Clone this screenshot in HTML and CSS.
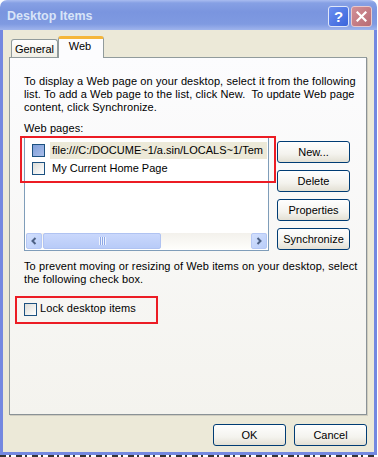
FILE: index.html
```html
<!DOCTYPE html>
<html lang="en">
<head>
  <meta charset="UTF-8" />
  <title>Desktop Items</title>
  <link rel="stylesheet" href="styles.css">
</head>
<body>

<div class="window">
  <div class="titlebar">
    <span class="title">Desktop Items</span>
    <div class="caption-btns">
      <div class="cap-btn help">?</div>
      <div class="cap-btn close">
        <svg width="11" height="11" viewBox="0 0 11 11"><path d="M1.5 1.5 L9.5 9.5 M9.5 1.5 L1.5 9.5" stroke="#fff" stroke-width="2.2" stroke-linecap="square"/></svg>
      </div>
    </div>
  </div>

  <div class="frame">
    <div class="tabs">
      <div class="tab">General</div>
      <div class="tab active">Web</div>
    </div>

    <div class="panel">
      <p class="text first">To display a Web page on your desktop, select it from the following<br>list. To add a Web page to the list, click New.&nbsp; To update Web page<br>content, click Synchronize.</p>
      <div class="text label">Web pages:</div>

      <div class="list-row">
        <div class="listbox">
          <div class="items">
            <div class="item">
              <span class="check hot"></span>
              <span class="item-text selected">file:///C:/DOCUME~1/a.sin/LOCALS~1/Tem</span>
            </div>
            <div class="item">
              <span class="check"></span>
              <span class="item-text">My Current Home Page</span>
            </div>
          </div>
          <div class="hscroll">
            <div class="arrow">
              <svg width="8" height="8" viewBox="0 0 8 8"><path d="M5.5 1 L2.5 4 L5.5 7" fill="none" stroke="#4d6185" stroke-width="2"/></svg>
            </div>
            <div class="thumb"><span class="grip"></span></div>
            <div class="track"></div>
            <div class="arrow">
              <svg width="8" height="8" viewBox="0 0 8 8"><path d="M2.5 1 L5.5 4 L2.5 7" fill="none" stroke="#4d6185" stroke-width="2"/></svg>
            </div>
          </div>
        </div>

        <div class="side-btns">
          <button class="btn">New...</button>
          <button class="btn">Delete</button>
          <button class="btn">Properties</button>
          <button class="btn">Synchronize</button>
        </div>
      </div>

      <p class="text second">To prevent moving or resizing of Web items on your desktop, select<br>the following check box.</p>

      <div class="lock">
        <span class="check"></span>
        <span class="text">Lock desktop items</span>
      </div>

      <div class="mark mark-list"></div>
      <div class="mark mark-lock"></div>
    </div>

    <div class="footer">
      <button class="btn">OK</button>
      <button class="btn">Cancel</button>
    </div>
  </div>
</div>
<div class="behind"></div>

</body>
</html>
```

FILE: styles.css
```css
body {
  margin: 0;
  background: #fff;
  font-family: 'Liberation Sans', Arial, sans-serif;
  font-size: 11px;
  color: #000;
}
.window {
  width: 377px;
}
.titlebar {
  height: 30px;
  border-radius: 7px 7px 0 0;
  background: linear-gradient(#a9bcf0 0, #86a0e4 3px, #7a95df 40%, #7f9ae1 80%, #9fb4ec 100%);
  display: flex;
  align-items: center;
  justify-content: space-between;
  padding: 0 5px 0 7px;
}
.title {
  font-weight: bold;
  font-size: 12.5px;
  color: #d8e4f8;
  margin-top: 2px;
}
.caption-btns {
  display: flex;
  gap: 2px;
  margin-top: 3px;
}
.cap-btn {
  width: 21px;
  height: 21px;
  box-sizing: border-box;
  border: 1px solid #dfe6f8;
  border-radius: 3px;
  display: flex;
  align-items: center;
  justify-content: center;
  color: #fff;
}
.help {
  background: linear-gradient(135deg, #6b8ff0, #3a64db);
  font-weight: bold;
  font-size: 15px;
}
.close {
  background: linear-gradient(135deg, #d29097, #b86b74);
  border-color: #e8c8cc;
}
.frame {
  height: 425px;
  box-sizing: border-box;
  background: #ece9d8;
  border: 3px solid #7488e0;
  border-top: 0;
  padding: 6px 7px 6px 6px;
  display: flex;
  flex-direction: column;
}
.tabs {
  height: 21px;
  display: flex;
  align-items: flex-end;
  padding-left: 2px;
}
.tab {
  height: 18px;
  box-sizing: border-box;
  width: 47px;
  border: 1px solid #919b9c;
  border-bottom: 0;
  border-radius: 3px 3px 0 0;
  background: linear-gradient(#fefefe, #f1efe6);
  text-align: center;
  line-height: 18px;
}
.tab.active {
  height: 22px;
  width: 46px;
  margin-bottom: -1px;
  border-top: 3px solid #f5b63a;
  background: #fcfcfe;
  line-height: 14px;
  position: relative;
  z-index: 1;
  text-indent: -2px;
}
.panel {
  height: 358px;
  box-sizing: border-box;
  border: 1px solid #919b9c;
  border-right-color: #8a9296;
  border-bottom-color: #8a9296;
  box-shadow: 1px 1px 0 #d0cdc0;
  background: linear-gradient(#fcfcfe, #f4f3ee);
  padding: 0 14px;
  position: relative;
}
.text {
  line-height: 13px;
  white-space: nowrap;
  letter-spacing: 0.1px;
}
p {
  margin: 0;
}
.first {
  margin-top: 17px;
}
.label {
  margin-top: 8px;
}
.list-row {
  display: flex;
  gap: 8px;
  margin-top: 2px;
}
.listbox {
  width: 245px;
  height: 114px;
  box-sizing: border-box;
  border: 1px solid #7f9db9;
  background: #fff;
  padding: 1px;
  display: flex;
  flex-direction: column;
  overflow: hidden;
}
.items {
  flex: 1;
  padding: 3px 0 0 6px;
  overflow: hidden;
}
.item {
  height: 18px;
  display: flex;
  align-items: flex-start;
  white-space: nowrap;
}
.check {
  flex: none;
  width: 13px;
  height: 13px;
  box-sizing: border-box;
  border: 1px solid #1c5180;
  background: linear-gradient(135deg, #dcdcd7, #fff);
  margin-top: 2px;
}
.check.hot {
  background: linear-gradient(135deg, #7f9fd9, #a9bde9);
}
.item-text {
  margin-left: 5px;
  padding: 0 2px;
  line-height: 17px;
}
.item-text.selected {
  flex: 1;
  background: #ece9d8;
  overflow: hidden;
}
.hscroll {
  height: 16px;
  display: flex;
  gap: 1px;
  background: linear-gradient(#f3f1ec, #fefefb);
}
.arrow {
  width: 16px;
  height: 16px;
  box-sizing: border-box;
  border: 1px solid #b6c8f5;
  border-radius: 2px;
  background: linear-gradient(135deg, #d3e0fd, #b9cdf9);
  display: flex;
  align-items: center;
  justify-content: center;
}
.thumb {
  width: 118px;
  box-sizing: border-box;
  border: 1px solid #b0c3f2;
  border-radius: 2px;
  background: linear-gradient(#cad8fc, #b8cbf8);
  display: flex;
  align-items: center;
  justify-content: center;
}
.grip {
  width: 7px;
  height: 8px;
  background: repeating-linear-gradient(90deg, #eef3fe 0 1px, #8ea8e6 1px 2px);
}
.track {
  flex: 1;
}
.side-btns {
  display: flex;
  flex-direction: column;
  gap: 7px;
  margin-top: 4px;
}
.btn {
  width: 73px;
  height: 22px;
  box-sizing: border-box;
  border: 1px solid #003c74;
  border-radius: 3px;
  background: linear-gradient(#fefefe, #f4f3ee 60%, #e3e0d4);
  font-family: 'Liberation Sans', Arial, sans-serif;
  font-size: 11px;
  color: #000;
  padding: 0;
}
.second {
  margin-top: 9px;
}
.lock {
  display: flex;
  align-items: flex-start;
  gap: 3px;
  margin-top: 16px;
}
.lock .check {
  margin-top: 1px;
}
.mark {
  position: absolute;
  box-sizing: border-box;
  border: 2px solid #ec1c24;
}
.mark-list {
  left: 10px;
  top: 78px;
  width: 256px;
  height: 47px;
}
.mark-lock {
  left: 5px;
  top: 238px;
  width: 143px;
  height: 28px;
}
.footer {
  margin-top: 9px;
  display: flex;
  justify-content: flex-end;
  gap: 8px;
}
.behind {
  width: 377px;
  height: 2px;
  background: repeating-linear-gradient(90deg, #333 0 6px, #fff 6px 9px, #333 9px 11px, #fff 11px 16px);
}
```
